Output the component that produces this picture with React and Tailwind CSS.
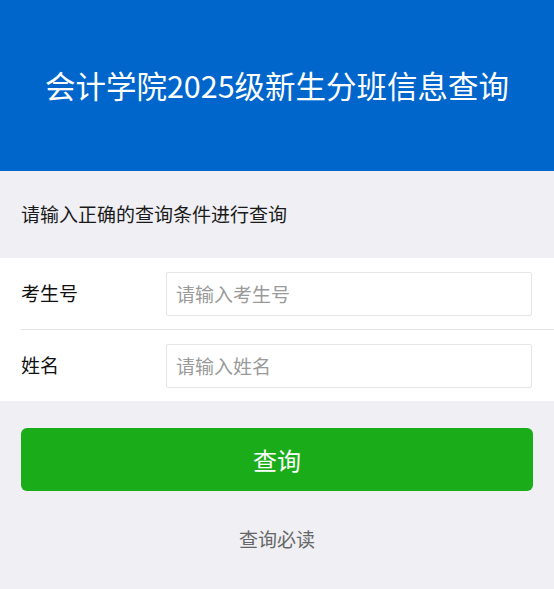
import React from "react";

const font = { fontFamily: '"Noto Sans CJK SC", "Noto Sans", sans-serif' };

const Field = ({ label, placeholder, divider }) => (
  <div className={divider ? "ml-[21px] border-t border-[#e5e5e5]" : "ml-[21px]"}>
    <div className="flex items-center h-[71px] pr-[22px]">
      <label className="w-[145px] shrink-0 text-[19px] text-[#111]">{label}</label>
      <input
        type="text"
        placeholder={placeholder}
        className="flex-1 h-[44px] border border-[#e6e6e6] rounded-[2px] px-[9px] text-[19px] text-[#333] placeholder:text-[#9a9a9a] outline-none bg-white"
      />
    </div>
  </div>
);

export default function App() {
  return (
    <div style={font} className="min-h-screen bg-[#efeff4]">
      <header className="h-[171px] bg-[#0066cc] flex items-center justify-center">
        <h1 className="text-[30.5px] font-normal text-white">
          会计学院2025级新生分班信息查询
        </h1>
      </header>

      <div className="h-[87px] flex items-center px-[21px] text-[19px] text-[#1a1a1a]">
        请输入正确的查询条件进行查询
      </div>

      <div className="bg-white">
        <Field label="考生号" placeholder="请输入考生号" />
        <Field label="姓名" placeholder="请输入姓名" divider />
      </div>

      <div className="px-[21px] pt-[27px]">
        <button className="w-full h-[63px] rounded-[6px] bg-[#1aad19] text-white text-[24px]">
          查询
        </button>
      </div>

      <div className="mt-[36px] h-[24px] leading-[24px] text-center text-[19px] text-[#666]">
        查询必读
      </div>
    </div>
  );
}
